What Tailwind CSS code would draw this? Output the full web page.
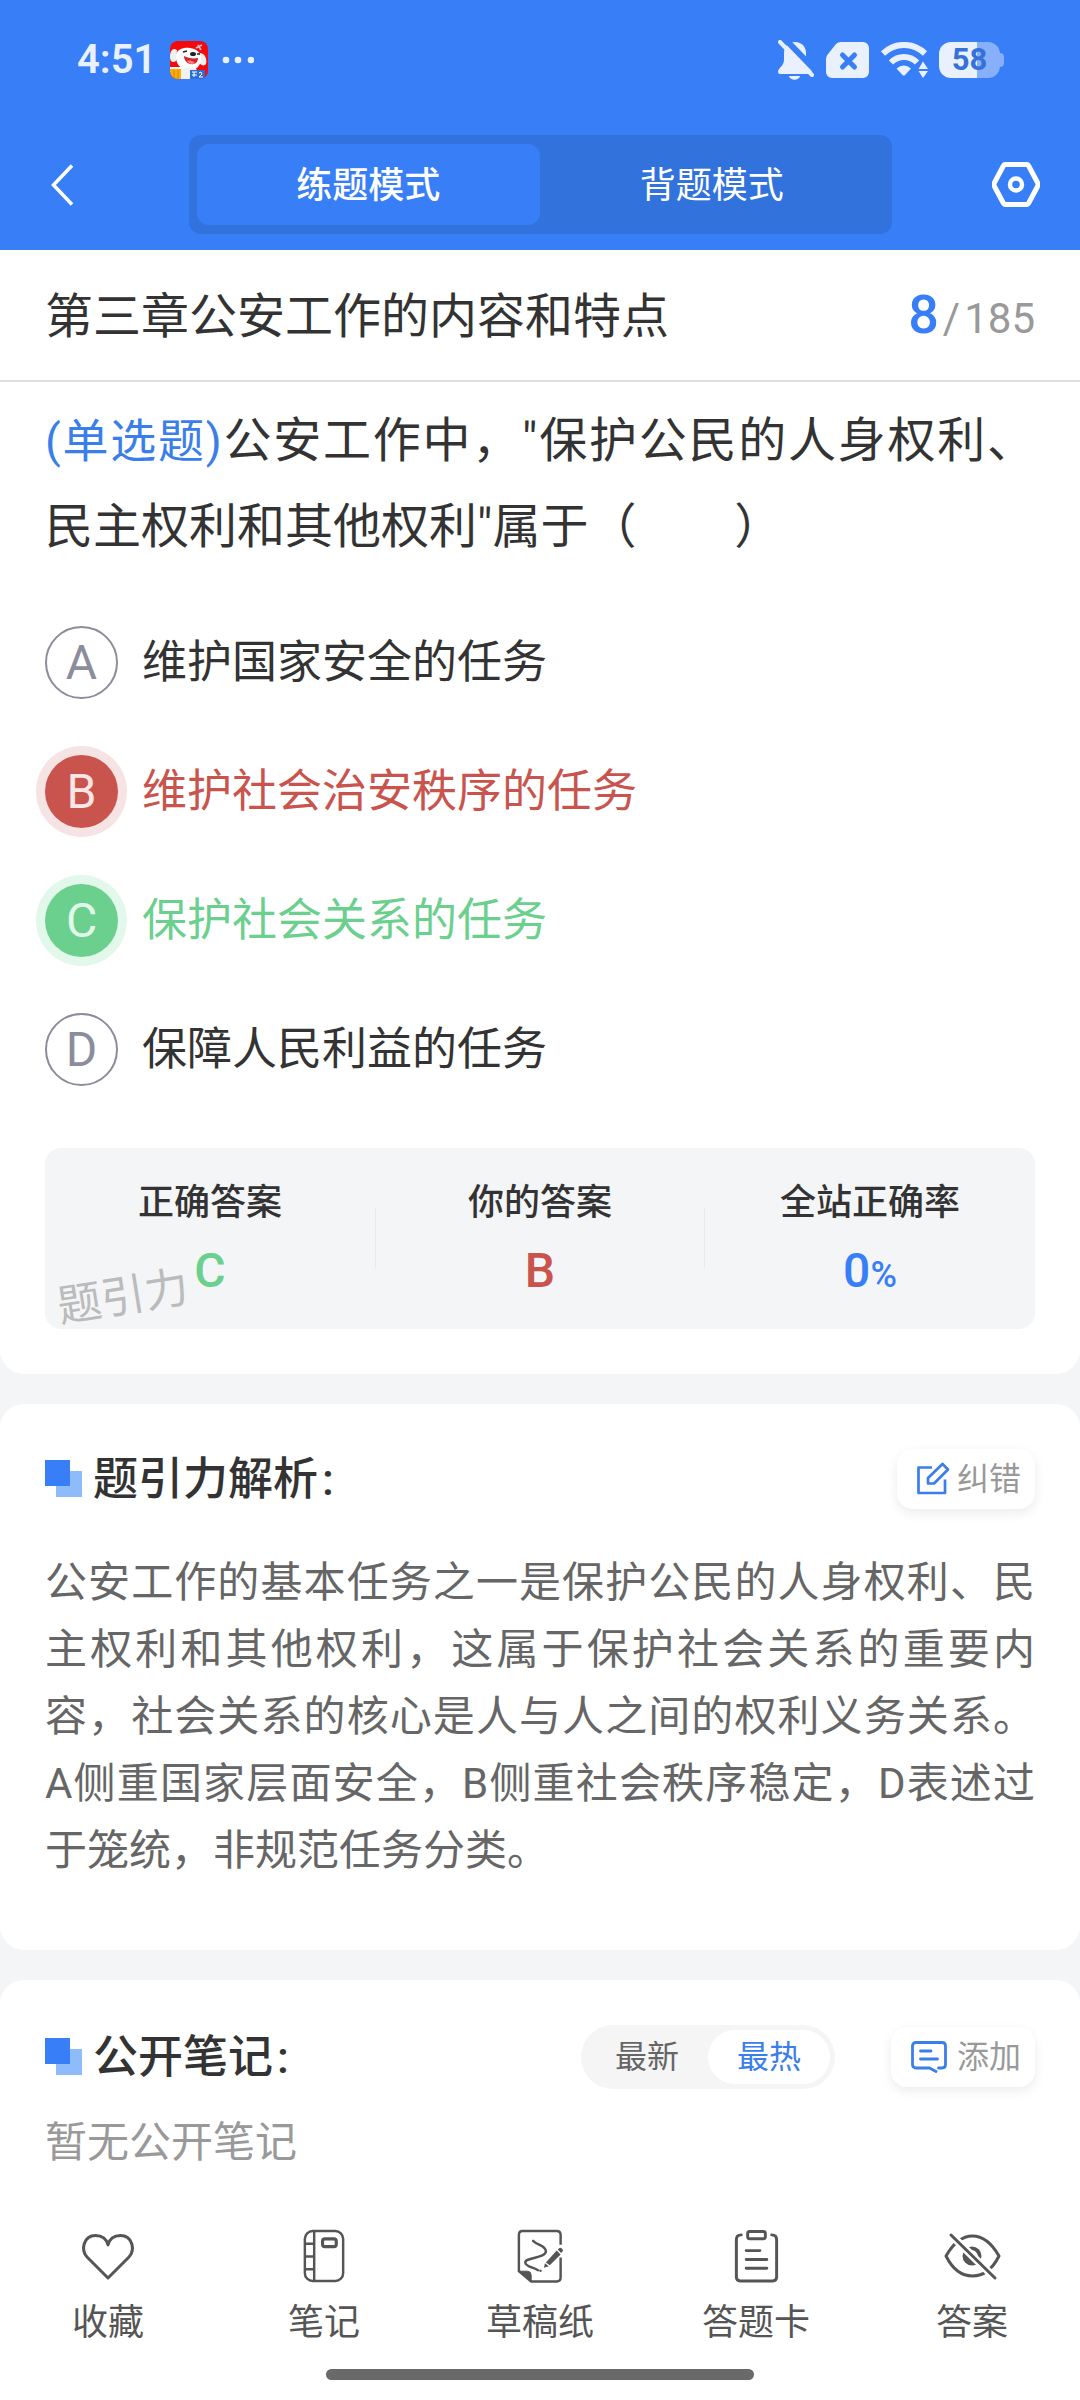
<!DOCTYPE html>
<html lang="zh-CN">
<head>
  <meta charset="UTF-8">
  <meta name="viewport" content="width=device-width, initial-scale=1.0">
  <script src="https://cdn.jsdelivr.net/npm/@tailwindcss/browser@4"></script>
  <title>练题模式</title>
</head>
<body class="bg-[#f4f5f7] font-['Roboto','Noto_Sans_CJK_SC',sans-serif] text-[#333] min-h-screen flex flex-col">

  <!-- Header -->
  <header class="bg-[#377ef7] text-white">

    <!-- Status bar -->
    <div class="flex justify-between items-center h-[119px] pl-[77px] pr-[76px]">
      <div class="flex items-center">
        <span class="font-semibold text-[40px] leading-none text-[#eaf1fe]">4:51</span>
        <svg class="ml-[14px] w-[38px] h-[38px]" viewBox="0 0 38 38">
          <clipPath id="appShape"><rect width="38" height="38" rx="8"/></clipPath>
          <g clip-path="url(#appShape)">
            <rect width="38" height="38" fill="#f40a0a"/>
            <path d="M0 26h12v3H0zM0 31h10v-2H0z" fill="#fff"/>
            <path d="M7 9C2 6 0 11 0 16c0 5 3 6 6 4zM30 12c6 1 7 7 6 11-2 3-6 1-8-3z" fill="#f1efee"/>
            <path d="M6 14C7 8 14 6 20 7c7 1 12 5 11 12-1 7-6 11-13 10C10 28 5 22 6 14z" fill="#fff"/>
            <path d="M11 27h15l3 11H9z" fill="#f2f2f2"/>
            <path d="M14 15c4 2 9 3 14 2 0 4-3 7-7 6-4 0-7-4-7-8z" fill="#d8232a"/>
            <path d="M17 20c3-1 6 0 8 2-2 2-6 1-8-2z" fill="#ff7d7d"/>
            <ellipse cx="23" cy="13" rx="3" ry="2" fill="#222"/>
            <path d="M13 11l4-1M27 13l3 0" stroke="#222" stroke-width="1.5"/>
            <path d="M26 7l6-3M28 4l3 5" stroke="#b9c4d6" stroke-width="1.5"/>
            <rect y="28" width="11" height="10" fill="#ffab0a"/>
            <path d="M4 29v9M8 29v9" stroke="#e08600"/>
            <rect x="20" y="29" width="15" height="9" fill="#2b6fd4"/>
            <path d="M22 31h5M22 34h5M24 31v5M29 32l2-1 1 2-3 3h4" stroke="#fff" fill="none"/>
          </g>
        </svg>
        <svg class="ml-[14px] w-8 h-2" viewBox="0 0 32 8" fill="#eaf1fe">
          <circle cx="4" cy="4" r="3.3"/><circle cx="16" cy="4" r="3.3"/><circle cx="29" cy="4" r="3.3"/>
        </svg>
      </div>
      <div class="flex items-center text-[#eaf1fe]">
        <svg class="w-9 h-10" viewBox="0 0 36 40" fill="currentColor">
          <path d="M17 2c7 0 11 5 11 11v7c0 6 6 8 6 12q0 2-2 2H2q-2 0-2-2c0-4 6-6 6-12v-7C6 7 10 2 17 2z"/>
          <path d="M11 36h11c-1 5-10 5-11 0z"/>
          <path d="M6-2l34 35" stroke="#377ef7" stroke-width="6"/>
          <path d="M2 2l32 33" stroke="currentColor" stroke-width="4" stroke-linecap="round"/>
        </svg>
        <svg class="ml-3 w-[43px] h-9" viewBox="0 0 43 36" fill="currentColor">
          <path d="M15 0h22a6 6 0 0 1 6 6v24a6 6 0 0 1-6 6H6a6 6 0 0 1-6-6V17q0-3 2-5l8-10q2-2 5-2z"/>
          <path d="M16.500 13l12 12m0-12l-12 12" stroke="#377ef7" stroke-width="5" stroke-linecap="round"/>
        </svg>
        <svg class="ml-3 w-12 h-9" viewBox="0 0 48 36" fill="none" stroke="currentColor" stroke-width="6">
          <path d="M2 11.500a30 30 0 0 1 42 0M10 20.500a18 18 0 0 1 26 0"/>
          <path d="M15.500 26.500q7.500-6 14.500 0l-6 6.500q-1 1-2.500 0z" fill="currentColor" stroke="none"/>
          <path d="M42 16l7 11.500-7 11.500-7-11.500z" fill="#377ef7" stroke="none"/>
          <path d="M37.500 27l4.500-7.500 5 7.500zM37.500 29h9.500l-5 7z" fill="currentColor" stroke="none"/>
        </svg>
        <div class="ml-[10px] flex items-center">
          <span class="w-[61px] h-9 rounded-xl bg-[linear-gradient(90deg,#eaf1fe_62%,#87affa_62%)] text-[#3571d8] font-bold text-[31px] leading-9 text-center">58</span>
          <span class="w-1 h-[14px] rounded-e-full bg-[#87affa]"></span>
        </div>
      </div>
    </div>

    <!-- Mode switch -->
    <div class="flex justify-between items-center h-[131px] pl-[50px] pr-10">
      <button class="w-[38px] h-12 flex items-center" aria-label="返回">
        <svg class="w-6 h-[42px]" viewBox="0 0 24 42" fill="none" stroke="#fff" stroke-width="3.500"><path d="M22 1.500L3.500 21 22 40.500"/></svg>
      </button>
      <div class="flex w-[703px] h-[99px] px-2 py-[9px] mx-10 rounded-xl bg-[#3172dc] text-[36px]">
        <button class="flex-1 pt-[2px] rounded-xl bg-[#377ef7] font-medium">练题模式</button>
        <button class="flex-1 pt-[2px]">背题模式</button>
      </div>
      <button class="w-12 h-12 flex items-center" aria-label="设置">
        <svg class="w-12 h-[45px]" viewBox="0 0 48 45" fill="none" stroke="#fff" stroke-linejoin="round">
          <path d="M13 2.500h22q1 0 2 2l8.500 16q1 2 0 4l-8.500 16q-1 2-2 2H13q-1 0-2-2l-8.500-16q-1-2 0-4L11 4.500q1-2 2-2z" stroke-width="5"/>
          <circle cx="24" cy="22.500" r="6" stroke-width="4.500"/>
        </svg>
      </button>
    </div>
  </header>

  <main class="flex flex-col flex-1 gap-[30px]">

    <!-- Question -->
    <section class="bg-white rounded-b-3xl pb-[45px]">
      <div class="flex justify-between items-center h-[132px] px-[45px] border-b-2 border-[#dedede]">
        <h1 class="pt-1 text-[48px]">第三章公安工作的内容和特点</h1>
        <p class="flex items-baseline gap-1 text-[42px] text-[#999]">
          <span class="text-[54px] leading-none font-medium text-[#377ef7]">8</span><span class="leading-none">/</span><span class="leading-none">185</span>
        </p>
      </div>

      <div class="px-[45px] pt-4">
        <p class="text-[48px] leading-[86px] text-justify"><span class="text-[46px] text-[#3a7eea]">(单选题)</span>公安工作中，"保护公民的人身权利、民主权利和其他权利"属于（&emsp;&emsp;）</p>

        <div class="flex flex-col gap-14 mt-14 text-[45px]">
          <button class="flex items-center gap-6 h-[73px]">
            <span class="w-[73px] h-[73px] rounded-full border-2 border-[#8b8c9c] text-[#8b8c9c] text-[48px] flex justify-center items-center">A</span>
            <span>维护国家安全的任务</span>
          </button>
          <button class="flex items-center gap-6 h-[73px] text-[#c9544e]">
            <span class="w-[73px] h-[73px] rounded-full bg-[#c9544e] ring-9 ring-[#f6e3e3] text-[#f8e6e5] text-[48px] flex justify-center items-center">B</span>
            <span>维护社会治安秩序的任务</span>
          </button>
          <button class="flex items-center gap-6 h-[73px] text-[#6bd08d]">
            <span class="w-[73px] h-[73px] rounded-full bg-[#6bd08d] ring-9 ring-[#e2f8ea] text-[#e2f8ea] text-[48px] flex justify-center items-center">C</span>
            <span>保护社会关系的任务</span>
          </button>
          <button class="flex items-center gap-6 h-[73px]">
            <span class="w-[73px] h-[73px] rounded-full border-2 border-[#8b8c9c] text-[#8b8c9c] text-[48px] flex justify-center items-center">D</span>
            <span>保障人民利益的任务</span>
          </button>
        </div>

        <!-- Result -->
        <div class="relative mt-[62px] grid grid-cols-3 h-[181px] pt-[22px] rounded-2xl bg-[#f4f5f7] text-center">
          <div>
            <p class="text-[36px] leading-[66px] font-medium">正确答案</p>
            <p class="text-[48px] leading-[70px] font-medium text-[#6bd08d]">C</p>
          </div>
          <div class="relative">
            <span class="absolute left-0 top-[38px] w-px h-[60px] bg-[#e8eaee]"></span>
            <span class="absolute right-0 top-[38px] w-px h-[60px] bg-[#e8eaee]"></span>
            <p class="text-[36px] leading-[66px] font-medium">你的答案</p>
            <p class="text-[48px] leading-[70px] font-medium text-[#c9544e]">B</p>
          </div>
          <div>
            <p class="text-[36px] leading-[66px] font-medium">全站正确率</p>
            <p class="text-[48px] leading-[70px] font-medium text-[#377ef7]">0<span class="text-[36px] leading-none">%</span></p>
          </div>
          <span class="absolute left-3 bottom-[10px] text-[44px] leading-none text-[#bbb] -rotate-9">题引力</span>
        </div>
      </div>
    </section>

    <!-- Analysis -->
    <section class="bg-white rounded-3xl px-[45px] pt-[45px] pb-[66px]">
      <div class="flex justify-between items-center h-[60px]">
        <div class="flex items-center gap-[10px]">
          <svg class="w-[38px] h-[38px]" viewBox="0 0 38 38"><path d="M11 11h26v26H11z" fill="#8ebcfa"/><path d="M0 0h25v26H0z" fill="#377ef7"/></svg>
          <h2 class="pt-[2px] text-[45px] font-medium">题引力解析<span class="ml-1">:</span></h2>
        </div>
        <button class="flex items-center gap-[6px] h-[60px] pl-5 pr-[14px] rounded-2xl bg-white shadow-[0_4px_12px_rgba(0,0,0,0.08)] text-[32px] text-[#999]">
          <svg class="w-[34px] h-[34px]" viewBox="0 0 34 34" fill="none" stroke="#3a7eea" stroke-width="2.700" stroke-linejoin="round">
            <path d="M15 5.500H1.500V31H28V17.500"/><path d="M11 21.500v-5.500L25.500 2 31 7.500 17 21.500z"/>
          </svg>
          纠错
        </button>
      </div>
      <p class="mt-10 text-[42px] leading-[67px] text-justify text-[#666]">公安工作的基本任务之一是保护公民的人身权利、民主权利和其他权利，这属于保护社会关系的重要内容，社会关系的核心是人与人之间的权利义务关系。A侧重国家层面安全，B侧重社会秩序稳定，D表述过于笼统，非规范任务分类。</p>
    </section>

    <!-- Notes -->
    <section class="bg-white rounded-t-3xl flex-1 px-[45px] pt-[45px]">
      <div class="flex items-center h-16">
        <div class="flex items-center gap-[10px] mr-auto">
          <svg class="w-[38px] h-[38px]" viewBox="0 0 38 38"><path d="M11 11h26v26H11z" fill="#8ebcfa"/><path d="M0 0h25v26H0z" fill="#377ef7"/></svg>
          <h2 class="pt-[2px] text-[45px] font-medium">公开笔记<span class="ml-1">:</span></h2>
        </div>
        <div class="flex w-[254px] h-16 p-[5px] rounded-full bg-[#f5f5f5] text-[32px] text-[#666]">
          <button class="flex-1">最新</button>
          <button class="flex-1 rounded-full bg-white text-[#3a7eea]">最热</button>
        </div>
        <button class="ml-14 flex items-center gap-[10px] h-[60px] pl-5 pr-[14px] rounded-2xl bg-white shadow-[0_4px_12px_rgba(0,0,0,0.08)] text-[32px] text-[#999]">
          <svg class="w-9 h-8" viewBox="0 0 36 32" fill="none" stroke="#3a7eea" stroke-width="2.800" stroke-linecap="round" stroke-linejoin="round">
            <path d="M25 30.500L18.500 27H5q-3.500 0-3.500-3.500V5Q1.500 1.500 5 1.500h26q3.500 0 3.500 3.500v18.500q0 3.500-3.500 3.500h-3.500M9.500 10H20M9.500 18h17"/>
          </svg>
          添加
        </button>
      </div>
      <p class="mt-6 text-[42px] leading-[60px] text-[#999]">暂无公开笔记</p>
    </section>
  </main>

  <!-- Bottom bar -->
  <footer class="bg-white pt-[38px] pb-5">
    <nav class="grid grid-cols-5 text-[36px] text-[#555]">
      <button class="flex flex-col items-center gap-[14px]">
        <svg class="w-[52px] h-[54px]" viewBox="0 -4 52 54" fill="none" stroke="currentColor" stroke-width="3"><path d="M26 45L5.500 24.500C-2 16.500 2 2.500 13.500 2.500 20 2.500 24.500 6 26 12c1.500-6 6-9.500 12.500-9.500C50 2.500 54 16.500 46.500 24.500z" stroke-linejoin="round"/></svg>
        <span class="leading-[52px]">收藏</span>
      </button>
      <button class="flex flex-col items-center gap-[14px]">
        <svg class="w-[42px] h-[54px]" viewBox="0 0 42 55" fill="none" stroke="currentColor" stroke-width="2.500">
          <rect x="1.500" y="2" width="39" height="51" rx="8"/>
          <path d="M11 2v51M2 15h9M2 28h9M2 41h9"/>
          <rect x="19.500" y="10" width="14" height="8" rx="2.500" stroke-width="3.200"/>
        </svg>
        <span class="leading-[52px]">笔记</span>
      </button>
      <button class="flex flex-col items-center gap-[14px]">
        <svg class="w-[46px] h-[54px]" viewBox="0 0 46 55" fill="none" stroke="currentColor" stroke-width="2.500">
          <path d="M44 16V6q0-4-4-4H5Q1.500 2 1.500 6v37L14 53.500h26q4 0 4-4V29"/>
          <path d="M1.500 43H10q4 0 4 4v6.500z" fill="currentColor" stroke-width="1"/>
          <path d="M16 12c5 5 13 5 13 11-1 7-21 6-21 11 0 4 8 5 13 8" stroke-linecap="round"/>
          <path d="M29 34L40 22l4 4-11 11z" fill="currentColor" stroke="none"/>
          <path d="M41 21l1.500-1.500q1.500-1 3 .5t.500 3L44.500 24.500zM28 35l4 3-5 1.500z" fill="currentColor" stroke="none"/>
          <circle cx="23.500" cy="42.500" r="1.200" fill="currentColor" stroke="none"/>
        </svg>
        <span class="leading-[52px]">草稿纸</span>
      </button>
      <button class="flex flex-col items-center gap-[14px]">
        <svg class="w-[45px] h-[54px]" viewBox="0 0 45 55" fill="none" stroke="currentColor" stroke-width="3" stroke-linecap="round">
          <path d="M7 6q-5 0-5 5v38q0 4 4 4h33q4 0 4-4V11q0-5-5-5"/>
          <rect x="13.500" y="2.500" width="18" height="7.500" rx="2"/>
          <path d="M12 22h14M12 31h21M12 40h21"/>
        </svg>
        <span class="leading-[52px]">答题卡</span>
      </button>
      <button class="flex flex-col items-center gap-[14px]">
        <svg class="w-[57px] h-[54px]" viewBox="0 -4 57 54" fill="none" stroke="currentColor" stroke-width="3">
          <path d="M2 23C10 9 18 3 28.500 3S47 9 55 23C48 37 39 43 28.500 43S9 37 2 23z" stroke-linejoin="round"/>
          <circle cx="28" cy="23" r="9.500" fill="currentColor" stroke="none"/>
          <path d="M28 18q4 1 5 5" stroke="#fff" stroke-width="2"/>
          <path d="M5 0l47 46" stroke="#fff" stroke-width="8"/>
          <path d="M7 2l44 43" stroke-linecap="round"/>
        </svg>
        <span class="leading-[52px]">答案</span>
      </button>
    </nav>
    <div class="mx-auto mt-5 w-[428px] h-[11px] rounded-full bg-[#696969]"></div>
  </footer>

</body>
</html>
